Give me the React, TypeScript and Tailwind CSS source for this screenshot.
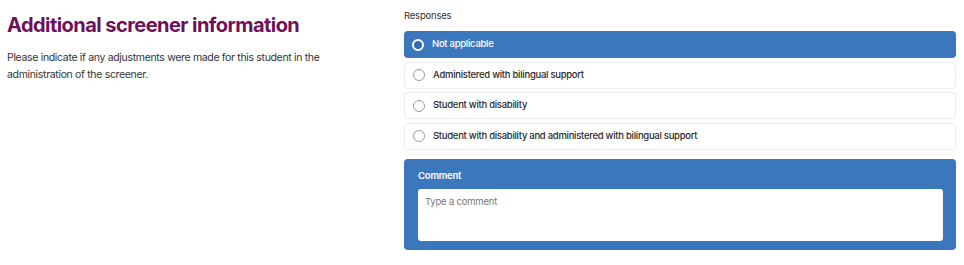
import React, { useState } from 'react';

const options = [
  'Not applicable',
  'Administered with bilingual support',
  'Student with disability',
  'Student with disability and administered with bilingual support',
];

const App: React.FC = () => {
  const [selected, setSelected] = useState(0);
  const [comment, setComment] = useState('');

  return (
    <div className="w-[964px] h-[265px] bg-white flex px-[7px] pt-[8px] font-['Inter',sans-serif] text-[#333]">
      <div className="flex-1">
        <h1 className="mt-[2px] text-[20px] tracking-[-0.55px] font-bold leading-[30px] text-[#6f105a]">
          Additional screener information
        </h1>
        <p className="mt-[9px] w-[330px] text-[10.5px] tracking-[-0.33px] leading-[17px] text-[#333]">
          Please indicate if any adjustments were made for this student in the administration of the screener.
        </p>
      </div>

      <div className="w-[552px] mr-[1px]">
        <div className="text-[9.5px] tracking-[-0.2px] leading-[14px] pt-[1px] text-[#333]">Responses</div>
        <div className="mt-[8px] flex flex-col gap-[3.5px]">
          {options.map((opt, i) => {
            const active = i === selected;
            return (
              <button
                key={opt}
                type="button"
                onClick={() => setSelected(i)}
                className={
                  active
                    ? 'h-[27px] flex items-center gap-[8px] px-[8px] rounded-[4px] bg-[#3b77bd] text-white text-left'
                    : 'h-[27px] flex items-center gap-[8px] px-[8px] rounded-[4px] bg-white border border-[#ececec] text-[#2b2b2b] text-left'
                }
              >
                {active ? (
                  <span className="w-[12px] h-[12px] rounded-full border-[2.5px] border-white bg-[#2f6db8]" />
                ) : (
                  <span className="w-[12px] h-[12px] rounded-full border border-[#999] bg-white" />
                )}
                <span className="text-[9.5px] tracking-[-0.28px] font-medium">{opt}</span>
              </button>
            );
          })}
        </div>

        <div className="mt-[9px] bg-[#3b77bd] rounded-[4px] pl-[14px] pr-[13px] pt-[10px] pb-[9px]">
          <div className="text-[9.5px] tracking-[-0.2px] font-semibold text-white leading-[14px]">Comment</div>
          <textarea
            value={comment}
            onChange={(e) => setComment(e.target.value)}
            placeholder="Type a comment"
            className="mt-[6px] block w-full h-[52px] resize-none rounded-[3px] bg-white px-[7px] py-[6px] text-[9.5px] tracking-[-0.2px] text-[#333] placeholder-[#777] focus:outline-none"
          />
        </div>
      </div>
    </div>
  );
};

export default App;
